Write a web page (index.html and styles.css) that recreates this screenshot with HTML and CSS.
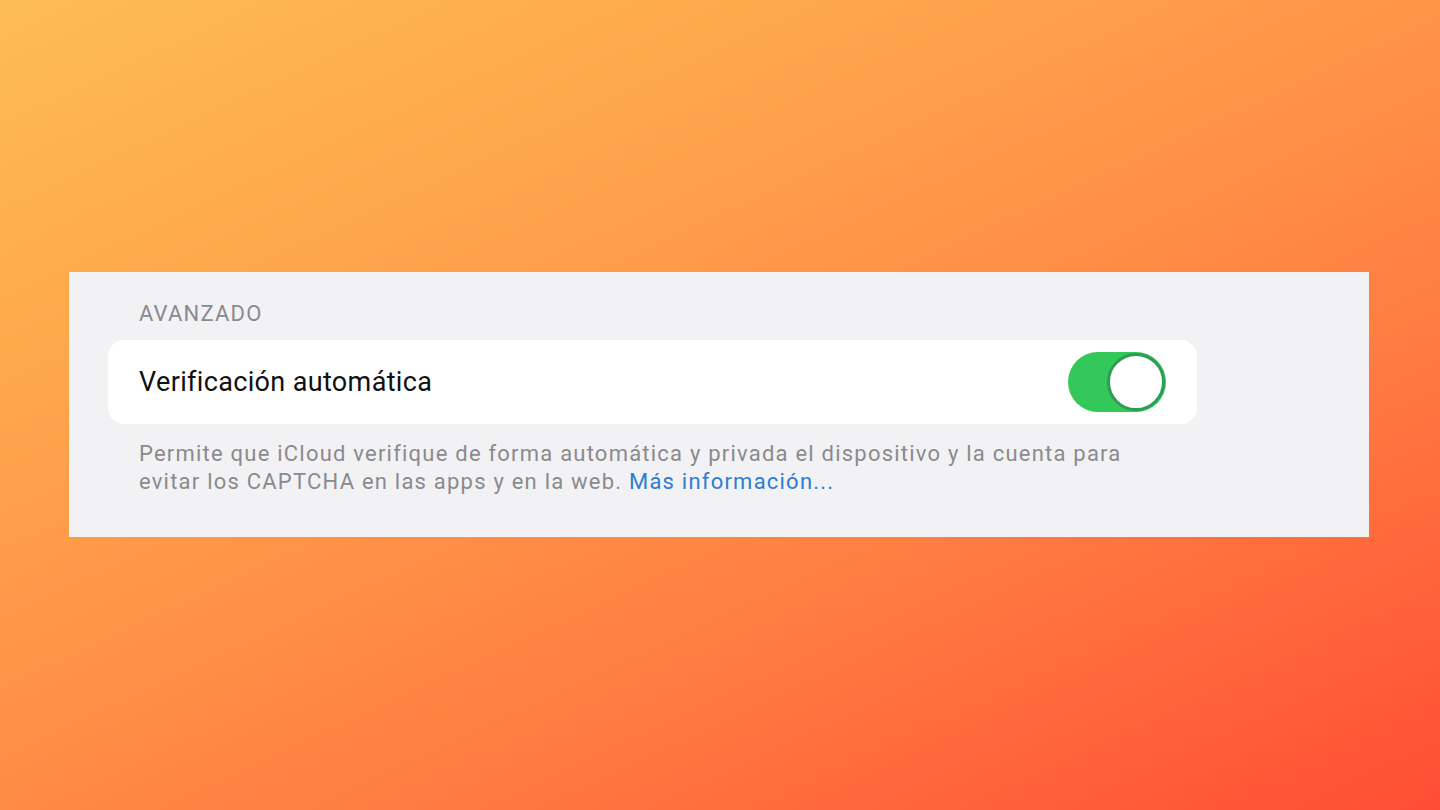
FILE: index.html
```html
<!DOCTYPE html>
<html lang="es">
<head>
    <meta charset="UTF-8">
    <meta name="viewport" content="width=device-width, initial-scale=1.0">
    <title>Verificación automática</title>
    <link rel="stylesheet" href="styles.css">
</head>
<body>

<div class="settings-panel">
    <div class="section-header">AVANZADO</div>

    <div class="settings-card">
        <span class="row-label">Verificación automática</span>
        <div class="toggle on">
            <div class="toggle-knob"></div>
        </div>
    </div>

    <p class="section-footer">
        Permite que iCloud verifique de forma automática y privada el dispositivo y la cuenta para
        evitar los CAPTCHA en las apps y en la web. <a href="#">Más información...</a>
    </p>
</div>

</body>
</html>
```

FILE: styles.css
```css
html, body {
    height: 100%;
}
body {
    margin: 0;
    padding: 272px 0 0 69px;
    box-sizing: border-box;
    font-family: 'Roboto', 'Liberation Sans', sans-serif;
    background: linear-gradient(155deg, #fdbd52 0%, #ff9f4a 35%, #ff7f43 65%, #ff4d34 100%);
    overflow: hidden;
}
.settings-panel {
    width: 1300px;
    height: 265px;
    box-sizing: border-box;
    background-color: #f2f2f4;
    padding: 30px 0 0 39px;
}
.section-header {
    padding-left: 31px;
    font-size: 22px;
    line-height: 24px;
    color: #8a8a8e;
    letter-spacing: 1.2px;
}
.settings-card {
    margin-top: 14px;
    width: 1089px;
    height: 84px;
    box-sizing: border-box;
    background-color: #fff;
    border-radius: 16px;
    padding: 0 31px;
    display: flex;
    justify-content: space-between;
    align-items: center;
}
.row-label {
    font-size: 27px;
    color: #111;
    letter-spacing: 0.35px;
}
.toggle {
    width: 98px;
    height: 60px;
    box-sizing: border-box;
    border-radius: 30px;
    background-color: #34c759;
    padding: 1px;
    display: flex;
    justify-content: flex-end;
    align-items: center;
}
.toggle-knob {
    width: 58px;
    height: 58px;
    box-sizing: border-box;
    border-radius: 50%;
    background-color: #fff;
    border: 3px solid #2f9c55;
}
.section-footer {
    margin: 16px 0 0;
    padding-left: 31px;
    max-width: 1000px;
    font-size: 22px;
    line-height: 28px;
    color: #8a8a8e;
    letter-spacing: 1.22px;
}
.section-footer a {
    color: #2f7dd1;
    text-decoration: none;
}
```
